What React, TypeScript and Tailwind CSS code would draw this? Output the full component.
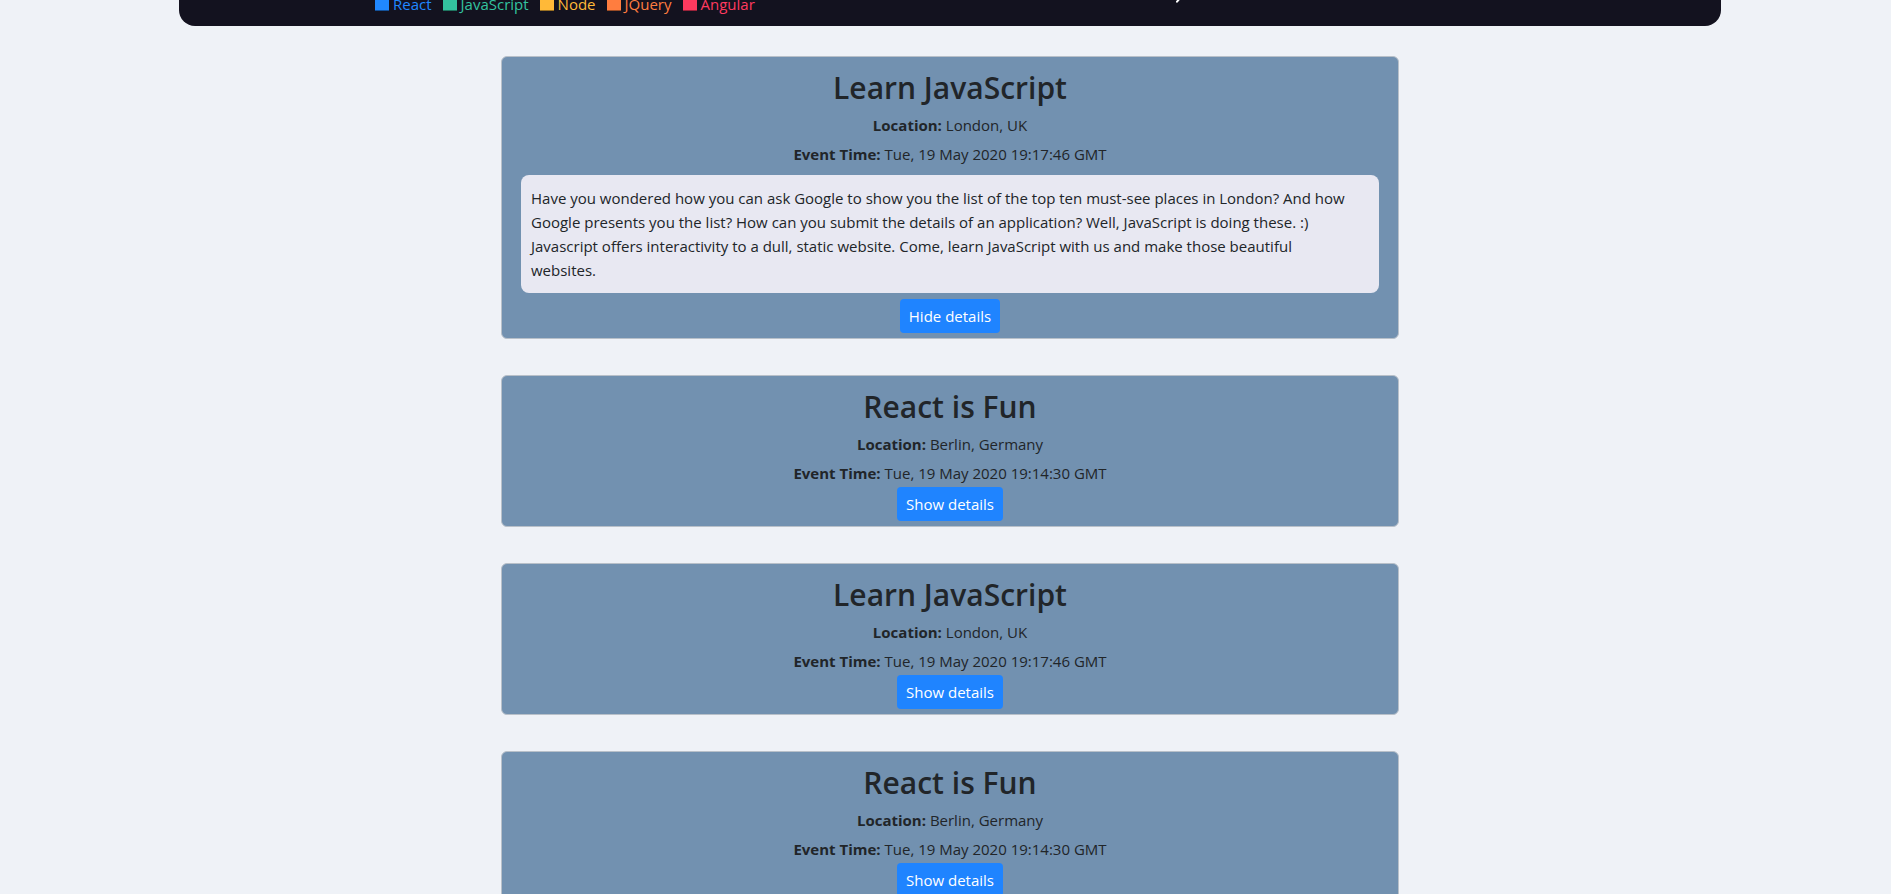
import { useState } from "react";

interface EventItem {
  id: number;
  title: string;
  location: string;
  time: string;
  details: string;
}

const TECHS = [
  { name: "React", color: "bg-[#2088ff]", text: "text-[#2088ff]" },
  { name: "JavaScript", color: "bg-[#33c39f]", text: "text-[#33c39f]" },
  { name: "Node", color: "bg-[#ffb938]", text: "text-[#ffb938]" },
  { name: "JQuery", color: "bg-[#ff7d3f]", text: "text-[#ff7d3f]" },
  { name: "Angular", color: "bg-[#ff3a5f]", text: "text-[#ff3a5f]" },
];

const JS_DETAILS =
  "Have you wondered how you can ask Google to show you the list of the top ten must-see places in London? And how Google presents you the list? How can you submit the details of an application? Well, JavaScript is doing these. :) Javascript offers interactivity to a dull, static website. Come, learn JavaScript with us and make those beautiful websites.";

const REACT_DETAILS =
  "React is a library for building user interfaces. Join us in Berlin and build components that are fun to write.";

const EVENTS: EventItem[] = [
  { id: 1, title: "Learn JavaScript", location: "London, UK", time: "Tue, 19 May 2020 19:17:46 GMT", details: JS_DETAILS },
  { id: 2, title: "React is Fun", location: "Berlin, Germany", time: "Tue, 19 May 2020 19:14:30 GMT", details: REACT_DETAILS },
  { id: 3, title: "Learn JavaScript", location: "London, UK", time: "Tue, 19 May 2020 19:17:46 GMT", details: JS_DETAILS },
  { id: 4, title: "React is Fun", location: "Berlin, Germany", time: "Tue, 19 May 2020 19:14:30 GMT", details: REACT_DETAILS },
];

function EventCard({ event, open }: { event: EventItem; open?: boolean }) {
  const [showDetails, setShowDetails] = useState(!!open);

  return (
    <div className="rounded-[6px] border border-[#b8c0c9] bg-[#7291b0] px-[19px] pt-[12px] pb-[5px] text-center text-[#212529]">
      <h2 className="mb-[7px] text-[30px] font-semibold leading-[37px]">{event.title}</h2>
      <p className="mb-[5px] text-[15px] leading-[24px]">
        <b className="font-bold">Location:</b> {event.location}
      </p>
      <p className="mb-[2px] text-[15px] leading-[24px]">
        <b className="font-bold">Event Time:</b> {event.time}
      </p>
      {showDetails && (
        <div className="mt-[9px] mb-[6px] rounded-[8px] bg-[#e8e8f2] py-[11px] pl-[10px] pr-[26px] text-left text-[15px] leading-[24px]">
          {event.details}
        </div>
      )}
      <button
        onClick={() => setShowDetails((v) => !v)}
        className="h-[34px] rounded-[4px] bg-[#1f84ff] px-[9px] text-[15px] leading-[24px] text-white"
      >
        {showDetails ? "Hide details" : "Show details"}
      </button>
    </div>
  );
}

export default function App() {
  return (
    <div
      className="min-h-screen bg-[#eff2f7] pl-[9px]"
      style={{ fontFamily: '"Segoe UI", "Open Sans", "Noto Sans", sans-serif' }}
    >
      {/* Header (scrolled, only its bottom edge shows) */}
      <header className="relative mx-auto h-[26px] w-[1542px] overflow-hidden rounded-b-2xl bg-[#13121f]">
        <div className="-mt-[8px] flex gap-[11px] pl-[196px] text-[15px] leading-[24px]">
          {TECHS.map((t) => (
            <div key={t.name} className="flex items-center gap-[4px]">
              <span className={`h-[14px] w-[14px] border-b border-black/40 ${t.color}`} />
              <span className={t.text}>{t.name}</span>
            </div>
          ))}
        </div>
        <span className="absolute left-[998px] top-[-2px] h-[5px] w-[2px] rotate-[40deg] rounded-full bg-white" />
      </header>

      {/* Events */}
      <main className="mx-auto flex w-[898px] flex-col gap-[36px] pt-[30px] pb-10">
        {EVENTS.map((e, i) => (
          <EventCard key={e.id} event={e} open={i === 0} />
        ))}
      </main>
    </div>
  );
}
